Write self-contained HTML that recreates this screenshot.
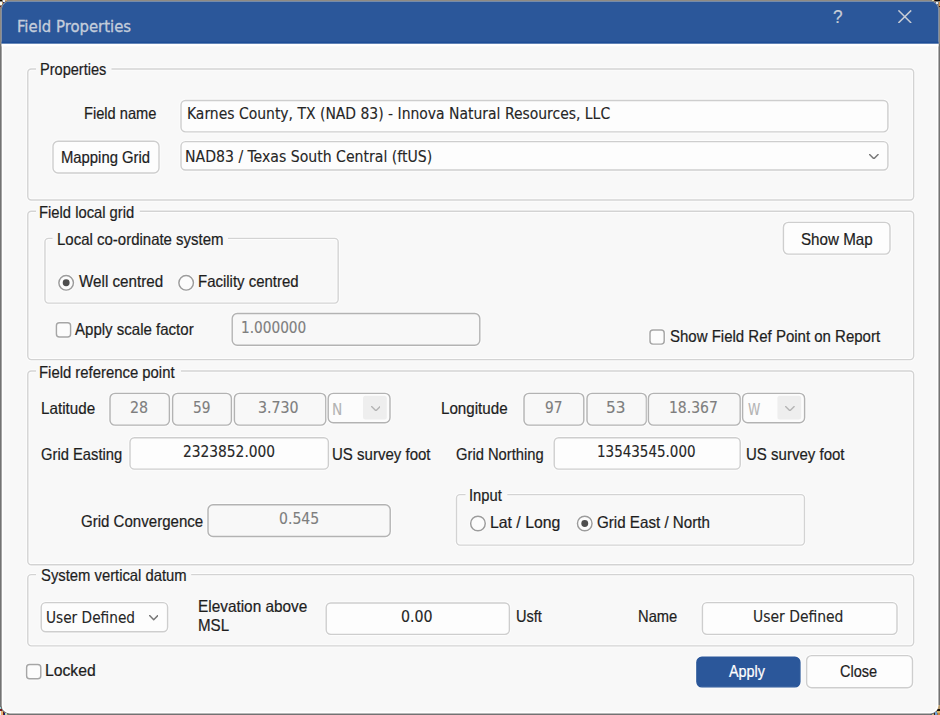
<!DOCTYPE html>
<html><head><meta charset="utf-8"><title>Field Properties</title>
<style>
*{box-sizing:border-box;margin:0;padding:0}
html,body{width:940px;height:715px;overflow:hidden}
body{position:relative;background:#737373;font-family:"Liberation Sans",sans-serif}
.frame{position:absolute;left:0;top:0}
.ui{position:absolute;left:0;top:0;width:940px;height:715px}
.ui>div,.ui>svg,.t{position:absolute}
.bx{left:0;top:0}
.t{white-space:pre;line-height:normal;transform-origin:0 0;-webkit-text-stroke:0.22px currentColor}
.lb{font-family:"Liberation Sans",sans-serif;font-size:16.5px}
.tx{font-family:"DejaVu Sans Condensed","DejaVu Sans",sans-serif;font-size:15.3px;-webkit-text-stroke-width:0.12px}
.cx{font-family:"DejaVu Sans Condensed","DejaVu Sans",sans-serif;font-size:15.6px;-webkit-text-stroke-width:0.1px}
.ti{font-family:"DejaVu Sans Condensed","DejaVu Sans",sans-serif;font-size:15.4px;-webkit-text-stroke-width:0.3px}
.qm{font-family:"Liberation Sans",sans-serif;font-size:17.5px}
</style></head><body>
<svg class="frame" width="940" height="715" viewBox="0 0 940 715">
<rect width="940" height="715" fill="#737373"/>
<rect width="940" height="1.6" fill="#8f8a82"/>
<rect width="1.7" height="44" fill="#8f8a82"/>
<rect x="938.3" width="1.7" height="44" fill="#8f8a82"/>
<g shape-rendering="crispEdges">
<rect x="0" y="0" width="2" height="1" fill="#050505"/><rect x="3" y="0" width="2" height="2" fill="#eef6ff"/><rect x="5" y="0" width="2" height="1" fill="#d9a366"/>
<rect x="0" y="2" width="2" height="3" fill="#fbfbf3"/><rect x="2" y="2" width="1" height="2" fill="#c79a5c"/><rect x="0" y="6" width="1" height="1" fill="#8b1d1d"/><rect x="3" y="2" width="1" height="1" fill="#2a2377"/>
<rect x="932" y="0" width="2" height="1" fill="#d9d9ab"/><rect x="934" y="0" width="1" height="1" fill="#7a3416"/><rect x="935" y="0" width="5" height="1" fill="#030308"/>
<rect x="936" y="2" width="2" height="2" fill="#e9edf4"/><rect x="939" y="2" width="1" height="4" fill="#d98f3f"/><rect x="939" y="6" width="1" height="1" fill="#3a1a0c"/>
<rect x="938" y="705" width="2" height="4" fill="#b89a6a"/><rect x="937" y="709" width="3" height="2" fill="#1d1208"/><rect x="937" y="711" width="3" height="2" fill="#d2b46c"/><rect x="938" y="713" width="2" height="2" fill="#d2843c"/>
<rect x="935" y="712" width="2" height="3" fill="#6aa0d8"/><rect x="934" y="713" width="1" height="2" fill="#3b1c12"/><rect x="932" y="714" width="2" height="1" fill="#c8b47a"/><rect x="930" y="714" width="2" height="1" fill="#55627a"/>
<rect x="0" y="707" width="1" height="2" fill="#9ad6d6"/><rect x="0" y="709" width="2" height="2" fill="#7c1f22"/><rect x="0" y="711" width="1" height="4" fill="#eef0f8"/><rect x="1" y="711" width="2" height="4" fill="#e8b070"/>
<rect x="3" y="712" width="1" height="3" fill="#6a1c1c"/><rect x="4" y="713" width="1" height="2" fill="#14207c"/><rect x="5" y="713" width="2" height="2" fill="#b8dcc8"/><rect x="7" y="714" width="1" height="1" fill="#b08850"/>
</g>
<rect x="1.65" y="1.5" width="936.8" height="711.95" rx="8" fill="#ffffff"/>
<rect x="3.4" y="40" width="933.4" height="671.8" rx="6.5" fill="#f8f8f8"/>
<path d="M1.65 43.6V9.5a8 8 0 0 1 8-8H930.45a8 8 0 0 1 8 8V43.75z" fill="#2b579a"/>
<rect x="1.65" y="41.75" width="936.8" height="2" fill="#1d4d96"/>
<rect x="1.65" y="43.75" width="936.8" height="2.65" fill="#ffffff"/>
<rect x="3.4" y="46.4" width="933.4" height="20" fill="#f8f8f8"/>
</svg>
<div class="ui">
<svg style="left:898.4px;top:9.7px" width="13.6" height="13.4" viewBox="0 0 13.6 13.4"><path d="M0.4 0.4L13.2 13M13.2 0.4L0.4 13" stroke="#c6cbd4" stroke-width="1.55" fill="none"/></svg>
<svg class="bx" width="940" height="715" viewBox="0 0 940 715"><rect x="27.80" y="68.95" width="885.85" height="131.05" rx="3.5" fill="none" stroke="#ffffff" stroke-opacity="0.65" stroke-width="3.4"/><rect x="27.80" y="68.95" width="885.85" height="131.05" rx="3.5" fill="none" stroke="#d3d3d3" stroke-width="1.4"/><rect x="36.00" y="66.45" width="75.50" height="5" fill="#f8f8f8"/></svg>
<svg class="bx" width="940" height="715" viewBox="0 0 940 715"><rect x="27.80" y="211.30" width="885.85" height="148.30" rx="3.5" fill="none" stroke="#ffffff" stroke-opacity="0.65" stroke-width="3.4"/><rect x="27.80" y="211.30" width="885.85" height="148.30" rx="3.5" fill="none" stroke="#d3d3d3" stroke-width="1.4"/><rect x="36.00" y="208.80" width="103.80" height="5" fill="#f8f8f8"/></svg>
<svg class="bx" width="940" height="715" viewBox="0 0 940 715"><rect x="44.95" y="238.40" width="293.20" height="64.70" rx="3.5" fill="none" stroke="#ffffff" stroke-opacity="0.65" stroke-width="3.4"/><rect x="44.95" y="238.40" width="293.20" height="64.70" rx="3.5" fill="none" stroke="#d3d3d3" stroke-width="1.4"/><rect x="52.50" y="235.90" width="175.50" height="5" fill="#f8f8f8"/></svg>
<svg class="bx" width="940" height="715" viewBox="0 0 940 715"><rect x="27.80" y="370.95" width="885.85" height="193.75" rx="3.5" fill="none" stroke="#ffffff" stroke-opacity="0.65" stroke-width="3.4"/><rect x="27.80" y="370.95" width="885.85" height="193.75" rx="3.5" fill="none" stroke="#d3d3d3" stroke-width="1.4"/><rect x="36.00" y="368.45" width="145.00" height="5" fill="#f8f8f8"/></svg>
<svg class="bx" width="940" height="715" viewBox="0 0 940 715"><rect x="456.50" y="494.60" width="347.95" height="50.50" rx="3.5" fill="none" stroke="#ffffff" stroke-opacity="0.65" stroke-width="3.4"/><rect x="456.50" y="494.60" width="347.95" height="50.50" rx="3.5" fill="none" stroke="#d3d3d3" stroke-width="1.4"/><rect x="465.50" y="492.10" width="41.80" height="5" fill="#f8f8f8"/></svg>
<svg class="bx" width="940" height="715" viewBox="0 0 940 715"><rect x="27.80" y="574.65" width="885.85" height="71.20" rx="3.5" fill="none" stroke="#ffffff" stroke-opacity="0.65" stroke-width="3.4"/><rect x="27.80" y="574.65" width="885.85" height="71.20" rx="3.5" fill="none" stroke="#d3d3d3" stroke-width="1.4"/><rect x="36.00" y="572.15" width="155.20" height="5" fill="#f8f8f8"/></svg>
<svg class="bx" width="940" height="715" viewBox="0 0 940 715"><rect x="181.00" y="100.50" width="706.90" height="31.35" rx="4.5" fill="none" stroke="#ffffff" stroke-opacity="0.65" stroke-width="3.4"/><rect x="181.00" y="100.50" width="706.90" height="31.35" rx="4.5" fill="#fdfdfd" stroke="#cecece" stroke-width="1.4"/></svg>
<svg class="bx" width="940" height="715" viewBox="0 0 940 715"><rect x="181.00" y="141.60" width="706.90" height="28.45" rx="4.5" fill="none" stroke="#ffffff" stroke-opacity="0.65" stroke-width="3.4"/><rect x="181.00" y="141.60" width="706.90" height="28.45" rx="4.5" fill="#fdfdfd" stroke="#cecece" stroke-width="1.4"/></svg>
<svg style="left:869.0px;top:153.8px" width="9.700000000000045" height="5.599999999999994" viewBox="0 0 9.700000000000045 5.599999999999994"><path d="M0.6 0.6L4.850000000000023 4.7999999999999945L9.100000000000046 0.6" stroke="#777777" stroke-width="1.45" fill="none" stroke-linecap="round" stroke-linejoin="round"/></svg>
<svg class="bx" width="940" height="715" viewBox="0 0 940 715"><rect x="53.00" y="141.20" width="106.00" height="31.75" rx="5" fill="none" stroke="#ffffff" stroke-opacity="0.65" stroke-width="3.4"/><rect x="53.00" y="141.20" width="106.00" height="31.75" rx="5" fill="#fdfdfd" stroke="#cecece" stroke-width="1.4"/></svg>
<svg class="bx" width="940" height="715" viewBox="0 0 940 715"><rect x="783.40" y="222.40" width="106.60" height="31.75" rx="5" fill="none" stroke="#ffffff" stroke-opacity="0.65" stroke-width="3.4"/><rect x="783.40" y="222.40" width="106.60" height="31.75" rx="5" fill="#fdfdfd" stroke="#cecece" stroke-width="1.4"/></svg>
<svg class="bx" width="940" height="715" viewBox="0 0 940 715"><rect x="232.20" y="313.50" width="247.60" height="31.75" rx="5" fill="none" stroke="#ffffff" stroke-opacity="0.65" stroke-width="3.4"/><rect x="232.20" y="313.50" width="247.60" height="31.75" rx="5" fill="#f8f8f8" stroke="#b3b3b3" stroke-width="1.4"/></svg>
<svg class="bx" width="940" height="715" viewBox="0 0 940 715"><circle cx="66.15" cy="282.80" r="7.3" fill="#fcfcfc" stroke="#ffffff" stroke-opacity="0.6" stroke-width="3.4"/><circle cx="66.15" cy="282.80" r="7.3" fill="#fcfcfc" stroke="#9c9c9c" stroke-width="1.45"/><circle cx="66.15" cy="282.80" r="3.45" fill="#4e4e4e"/></svg>
<svg class="bx" width="940" height="715" viewBox="0 0 940 715"><circle cx="186.15" cy="282.80" r="7.3" fill="#fcfcfc" stroke="#ffffff" stroke-opacity="0.6" stroke-width="3.4"/><circle cx="186.15" cy="282.80" r="7.3" fill="#fcfcfc" stroke="#9c9c9c" stroke-width="1.45"/></svg>
<svg class="bx" width="940" height="715" viewBox="0 0 940 715"><rect x="56.40" y="322.70" width="14.2" height="14.2" rx="3" fill="#fcfcfc" stroke="#ffffff" stroke-opacity="0.6" stroke-width="3.4"/><rect x="56.40" y="322.70" width="14.2" height="14.2" rx="3" fill="#fcfcfc" stroke="#a6a6a6" stroke-width="1.45"/></svg>
<svg class="bx" width="940" height="715" viewBox="0 0 940 715"><rect x="650.00" y="329.90" width="14.2" height="14.2" rx="3" fill="#fcfcfc" stroke="#ffffff" stroke-opacity="0.6" stroke-width="3.4"/><rect x="650.00" y="329.90" width="14.2" height="14.2" rx="3" fill="#fcfcfc" stroke="#a6a6a6" stroke-width="1.45"/></svg>
<svg class="bx" width="940" height="715" viewBox="0 0 940 715"><rect x="110.00" y="393.40" width="59.40" height="31.75" rx="5" fill="none" stroke="#ffffff" stroke-opacity="0.65" stroke-width="3.4"/><rect x="110.00" y="393.40" width="59.40" height="31.75" rx="5" fill="#f8f8f8" stroke="#b3b3b3" stroke-width="1.4"/></svg>
<svg class="bx" width="940" height="715" viewBox="0 0 940 715"><rect x="172.60" y="393.40" width="58.80" height="31.75" rx="5" fill="none" stroke="#ffffff" stroke-opacity="0.65" stroke-width="3.4"/><rect x="172.60" y="393.40" width="58.80" height="31.75" rx="5" fill="#f8f8f8" stroke="#b3b3b3" stroke-width="1.4"/></svg>
<svg class="bx" width="940" height="715" viewBox="0 0 940 715"><rect x="234.40" y="393.40" width="91.40" height="31.75" rx="5" fill="none" stroke="#ffffff" stroke-opacity="0.65" stroke-width="3.4"/><rect x="234.40" y="393.40" width="91.40" height="31.75" rx="5" fill="#f8f8f8" stroke="#b3b3b3" stroke-width="1.4"/></svg>
<svg class="bx" width="940" height="715" viewBox="0 0 940 715"><rect x="524.00" y="393.40" width="59.80" height="31.75" rx="5" fill="none" stroke="#ffffff" stroke-opacity="0.65" stroke-width="3.4"/><rect x="524.00" y="393.40" width="59.80" height="31.75" rx="5" fill="#f8f8f8" stroke="#b3b3b3" stroke-width="1.4"/></svg>
<svg class="bx" width="940" height="715" viewBox="0 0 940 715"><rect x="587.00" y="393.40" width="59.40" height="31.75" rx="5" fill="none" stroke="#ffffff" stroke-opacity="0.65" stroke-width="3.4"/><rect x="587.00" y="393.40" width="59.40" height="31.75" rx="5" fill="#f8f8f8" stroke="#b3b3b3" stroke-width="1.4"/></svg>
<svg class="bx" width="940" height="715" viewBox="0 0 940 715"><rect x="648.40" y="393.40" width="91.80" height="31.75" rx="5" fill="none" stroke="#ffffff" stroke-opacity="0.65" stroke-width="3.4"/><rect x="648.40" y="393.40" width="91.80" height="31.75" rx="5" fill="#f8f8f8" stroke="#b3b3b3" stroke-width="1.4"/></svg>
<svg class="bx" width="940" height="715" viewBox="0 0 940 715"><rect x="328.20" y="393.40" width="61.80" height="29.35" rx="5" fill="none" stroke="#ffffff" stroke-opacity="0.65" stroke-width="3.4"/><rect x="328.20" y="393.40" width="61.80" height="29.35" rx="5" fill="#fcfcfc" stroke="#b3b3b3" stroke-width="1.4"/><rect x="363.00" y="395.80" width="23.8" height="23.6" rx="2.5" fill="#eeeeee"/></svg>
<svg class="bx" width="940" height="715" viewBox="0 0 940 715"><rect x="742.60" y="393.40" width="62.00" height="29.35" rx="5" fill="none" stroke="#ffffff" stroke-opacity="0.65" stroke-width="3.4"/><rect x="742.60" y="393.40" width="62.00" height="29.35" rx="5" fill="#fcfcfc" stroke="#b3b3b3" stroke-width="1.4"/><rect x="777.40" y="395.80" width="23.8" height="23.6" rx="2.5" fill="#eeeeee"/></svg>
<svg style="left:370.6px;top:405.5px" width="9.799999999999955" height="5.600000000000023" viewBox="0 0 9.799999999999955 5.600000000000023"><path d="M0.6 0.6L4.899999999999977 4.800000000000023L9.199999999999955 0.6" stroke="#b4b4b4" stroke-width="1.35" fill="none" stroke-linecap="round" stroke-linejoin="round"/></svg>
<svg style="left:784.8px;top:405.5px" width="9.800000000000068" height="5.600000000000023" viewBox="0 0 9.800000000000068 5.600000000000023"><path d="M0.6 0.6L4.900000000000034 4.800000000000023L9.200000000000069 0.6" stroke="#b4b4b4" stroke-width="1.35" fill="none" stroke-linecap="round" stroke-linejoin="round"/></svg>
<svg class="bx" width="940" height="715" viewBox="0 0 940 715"><rect x="130.00" y="437.80" width="198.40" height="31.35" rx="4.5" fill="none" stroke="#ffffff" stroke-opacity="0.65" stroke-width="3.4"/><rect x="130.00" y="437.80" width="198.40" height="31.35" rx="4.5" fill="#fdfdfd" stroke="#cecece" stroke-width="1.4"/></svg>
<svg class="bx" width="940" height="715" viewBox="0 0 940 715"><rect x="554.20" y="437.80" width="186.00" height="31.35" rx="4.5" fill="none" stroke="#ffffff" stroke-opacity="0.65" stroke-width="3.4"/><rect x="554.20" y="437.80" width="186.00" height="31.35" rx="4.5" fill="#fdfdfd" stroke="#cecece" stroke-width="1.4"/></svg>
<svg class="bx" width="940" height="715" viewBox="0 0 940 715"><rect x="208.00" y="504.80" width="182.20" height="31.75" rx="5" fill="none" stroke="#ffffff" stroke-opacity="0.65" stroke-width="3.4"/><rect x="208.00" y="504.80" width="182.20" height="31.75" rx="5" fill="#f8f8f8" stroke="#b3b3b3" stroke-width="1.4"/></svg>
<svg class="bx" width="940" height="715" viewBox="0 0 940 715"><circle cx="477.95" cy="523.50" r="7.3" fill="#fcfcfc" stroke="#ffffff" stroke-opacity="0.6" stroke-width="3.4"/><circle cx="477.95" cy="523.50" r="7.3" fill="#fcfcfc" stroke="#9c9c9c" stroke-width="1.45"/></svg>
<svg class="bx" width="940" height="715" viewBox="0 0 940 715"><circle cx="584.75" cy="523.50" r="7.3" fill="#fcfcfc" stroke="#ffffff" stroke-opacity="0.6" stroke-width="3.4"/><circle cx="584.75" cy="523.50" r="7.3" fill="#fcfcfc" stroke="#9c9c9c" stroke-width="1.45"/><circle cx="584.75" cy="523.50" r="3.45" fill="#4e4e4e"/></svg>
<svg class="bx" width="940" height="715" viewBox="0 0 940 715"><rect x="41.20" y="602.60" width="126.40" height="29.15" rx="4.5" fill="none" stroke="#ffffff" stroke-opacity="0.65" stroke-width="3.4"/><rect x="41.20" y="602.60" width="126.40" height="29.15" rx="4.5" fill="#fdfdfd" stroke="#cecece" stroke-width="1.4"/></svg>
<svg style="left:148.8px;top:615.2px" width="9.399999999999977" height="5.599999999999909" viewBox="0 0 9.399999999999977 5.599999999999909"><path d="M0.6 0.6L4.699999999999989 4.799999999999909L8.799999999999978 0.6" stroke="#777777" stroke-width="1.45" fill="none" stroke-linecap="round" stroke-linejoin="round"/></svg>
<svg class="bx" width="940" height="715" viewBox="0 0 940 715"><rect x="326.20" y="603.00" width="183.20" height="31.35" rx="4.5" fill="none" stroke="#ffffff" stroke-opacity="0.65" stroke-width="3.4"/><rect x="326.20" y="603.00" width="183.20" height="31.35" rx="4.5" fill="#fdfdfd" stroke="#cecece" stroke-width="1.4"/></svg>
<svg class="bx" width="940" height="715" viewBox="0 0 940 715"><rect x="702.40" y="602.60" width="194.60" height="31.75" rx="4.5" fill="none" stroke="#ffffff" stroke-opacity="0.65" stroke-width="3.4"/><rect x="702.40" y="602.60" width="194.60" height="31.75" rx="4.5" fill="#fdfdfd" stroke="#cecece" stroke-width="1.4"/></svg>
<svg class="bx" width="940" height="715" viewBox="0 0 940 715"><rect x="26.60" y="664.50" width="14.2" height="14.2" rx="3" fill="#fcfcfc" stroke="#ffffff" stroke-opacity="0.6" stroke-width="3.4"/><rect x="26.60" y="664.50" width="14.2" height="14.2" rx="3" fill="#fcfcfc" stroke="#a6a6a6" stroke-width="1.45"/></svg>
<svg class="bx" width="940" height="715" viewBox="0 0 940 715"><rect x="696.90" y="657.20" width="103.00" height="29.65" rx="5" fill="none" stroke="#ffffff" stroke-opacity="0.65" stroke-width="3.4"/><rect x="696.90" y="657.20" width="103.00" height="29.65" rx="5" fill="#2b579a" stroke="#2b579a" stroke-width="1.4"/></svg>
<svg class="bx" width="940" height="715" viewBox="0 0 940 715"><rect x="806.60" y="655.60" width="105.90" height="32.15" rx="5" fill="none" stroke="#ffffff" stroke-opacity="0.65" stroke-width="3.4"/><rect x="806.60" y="655.60" width="105.90" height="32.15" rx="5" fill="#fdfdfd" stroke="#cecece" stroke-width="1.4"/></svg>
<span class="t ti" style="left:16.83px;top:18.30px;color:#c4cddb;transform:scaleX(1.0748)">Field Properties</span>
<span class="t qm" style="left:833.20px;top:7.10px;color:#c9ced7;transform:scaleX(0.9800)">?</span>
<span class="t lb" style="left:39.92px;top:60.40px;color:#1e1e1e;transform:scaleX(0.8817)">Properties</span>
<span class="t lb" style="left:83.61px;top:103.60px;color:#1e1e1e;transform:scaleX(0.8863)">Field name</span>
<span class="t tx" style="left:187.49px;top:104.90px;color:#262626;transform:scaleX(1.0129)">Karnes County, TX (NAD 83) - Innova Natural Resources, LLC</span>
<span class="t lb" style="left:61.10px;top:147.50px;color:#1e1e1e;transform:scaleX(0.8991)">Mapping Grid</span>
<span class="t cx" style="left:185.20px;top:147.60px;color:#262626;transform:scaleX(1.0037)">NAD83 / Texas South Central (ftUS)</span>
<span class="t lb" style="left:39.10px;top:202.50px;color:#1e1e1e;transform:scaleX(0.8954)">Field local grid</span>
<span class="t lb" style="left:56.59px;top:230.00px;color:#1e1e1e;transform:scaleX(0.9082)">Local co-ordinate system</span>
<span class="t lb" style="left:78.50px;top:272.00px;color:#1e1e1e;transform:scaleX(0.9208)">Well centred</span>
<span class="t lb" style="left:197.59px;top:272.00px;color:#1e1e1e;transform:scaleX(0.9064)">Facility centred</span>
<span class="t lb" style="left:75.40px;top:319.80px;color:#1e1e1e;transform:scaleX(0.9110)">Apply scale factor</span>
<span class="t tx" style="left:241.01px;top:318.50px;color:#7e7e7e;transform:scaleX(0.9939)">1.000000</span>
<span class="t lb" style="left:800.50px;top:230.00px;color:#1e1e1e;transform:scaleX(0.9193)">Show Map</span>
<span class="t lb" style="left:670.00px;top:327.00px;color:#1e1e1e;transform:scaleX(0.9091)">Show Field Ref Point on Report</span>
<span class="t lb" style="left:39.10px;top:362.50px;color:#1e1e1e;transform:scaleX(0.9010)">Field reference point</span>
<span class="t lb" style="left:40.58px;top:399.20px;color:#1e1e1e;transform:scaleX(0.9211)">Latitude</span>
<span class="t tx" style="left:130.17px;top:399.00px;color:#7e7e7e;transform:scaleX(1.0347)">28</span>
<span class="t tx" style="left:192.80px;top:399.00px;color:#7e7e7e;transform:scaleX(0.9966)">59</span>
<span class="t tx" style="left:258.17px;top:399.00px;color:#7e7e7e;transform:scaleX(1.0311)">3.730</span>
<span class="t cx" style="left:332.02px;top:400.80px;color:#b3b3b3;transform:scaleX(0.9778)">N</span>
<span class="t lb" style="left:441.08px;top:399.20px;color:#1e1e1e;transform:scaleX(0.9185)">Longitude</span>
<span class="t tx" style="left:544.50px;top:399.00px;color:#7e7e7e;transform:scaleX(0.9968)">97</span>
<span class="t tx" style="left:606.39px;top:399.00px;color:#7e7e7e;transform:scaleX(1.1108)">53</span>
<span class="t tx" style="left:668.99px;top:399.00px;color:#7e7e7e;transform:scaleX(1.0133)">18.367</span>
<span class="t cx" style="left:747.60px;top:400.80px;color:#b3b3b3;transform:scaleX(0.8857)">W</span>
<span class="t lb" style="left:40.80px;top:445.00px;color:#1e1e1e;transform:scaleX(0.8939)">Grid Easting</span>
<span class="t tx" style="left:182.50px;top:443.20px;color:#262626;transform:scaleX(1.0016)">2323852.000</span>
<span class="t lb" style="left:331.59px;top:445.00px;color:#1e1e1e;transform:scaleX(0.9106)">US survey foot</span>
<span class="t lb" style="left:455.50px;top:445.00px;color:#1e1e1e;transform:scaleX(0.8934)">Grid Northing</span>
<span class="t tx" style="left:597.22px;top:443.20px;color:#262626;transform:scaleX(0.9787)">13543545.000</span>
<span class="t lb" style="left:746.09px;top:445.00px;color:#1e1e1e;transform:scaleX(0.9106)">US survey foot</span>
<span class="t lb" style="left:80.50px;top:511.80px;color:#1e1e1e;transform:scaleX(0.9123)">Grid Convergence</span>
<span class="t tx" style="left:278.80px;top:509.50px;color:#7e7e7e;transform:scaleX(1.0199)">0.545</span>
<span class="t lb" style="left:468.61px;top:486.00px;color:#1e1e1e;transform:scaleX(0.8944)">Input</span>
<span class="t lb" style="left:489.84px;top:513.00px;color:#1e1e1e;transform:scaleX(0.9582)">Lat / Long</span>
<span class="t lb" style="left:596.80px;top:513.00px;color:#1e1e1e;transform:scaleX(0.9185)">Grid East / North</span>
<span class="t lb" style="left:40.50px;top:565.80px;color:#1e1e1e;transform:scaleX(0.8975)">System vertical datum</span>
<span class="t cx" style="left:46.22px;top:609.30px;color:#262626;transform:scaleX(0.9771)">User Defined</span>
<span class="t lb" style="left:197.87px;top:597.00px;color:#1e1e1e;transform:scaleX(0.9308)">Elevation above</span>
<span class="t lb" style="left:197.88px;top:615.80px;color:#1e1e1e;transform:scaleX(0.9160)">MSL</span>
<span class="t tx" style="left:401.20px;top:607.90px;color:#262626;transform:scaleX(1.0309)">0.00</span>
<span class="t lb" style="left:515.52px;top:606.90px;color:#1e1e1e;transform:scaleX(0.8835)">Usft</span>
<span class="t lb" style="left:637.91px;top:606.90px;color:#1e1e1e;transform:scaleX(0.8918)">Name</span>
<span class="t tx" style="left:752.79px;top:608.00px;color:#262626;transform:scaleX(1.0117)">User Defined</span>
<span class="t lb" style="left:45.25px;top:660.80px;color:#1e1e1e;transform:scaleX(0.9533)">Locked</span>
<span class="t lb" style="left:729.20px;top:662.00px;color:#ffffff;transform:scaleX(0.8709)">Apply</span>
<span class="t lb" style="left:839.50px;top:662.00px;color:#1e1e1e;transform:scaleX(0.8808)">Close</span>
</div>
</body></html>
